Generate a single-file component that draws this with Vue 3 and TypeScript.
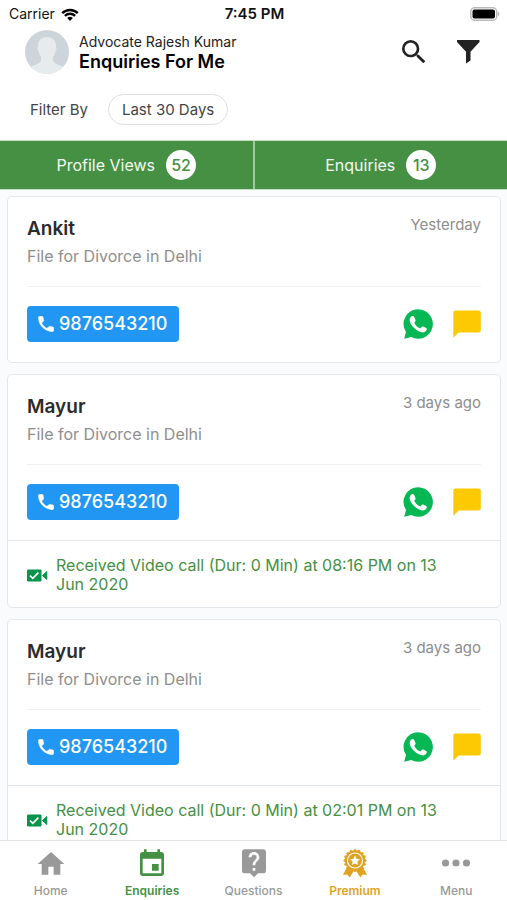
<script setup lang="ts">
interface Enquiry {
  id: number
  name: string
  when: string
  subject: string
  phone: string
  call?: string
}

interface NavItem {
  key: 'home' | 'enquiries' | 'questions' | 'premium' | 'menu'
  label: string
}

const tabs = [
  { label: 'Profile Views', count: 52 },
  { label: 'Enquiries', count: 13 },
]

const enquiries: Enquiry[] = [
  { id: 1, name: 'Ankit', when: 'Yesterday', subject: 'File for Divorce in Delhi', phone: '9876543210' },
  {
    id: 2,
    name: 'Mayur',
    when: '3 days ago',
    subject: 'File for Divorce in Delhi',
    phone: '9876543210',
    call: 'Received Video call (Dur: 0 Min) at 08:16 PM on 13 Jun 2020',
  },
  {
    id: 3,
    name: 'Mayur',
    when: '3 days ago',
    subject: 'File for Divorce in Delhi',
    phone: '9876543210',
    call: 'Received Video call (Dur: 0 Min) at 02:01 PM on 13 Jun 2020',
  },
]

const navItems: NavItem[] = [
  { key: 'home', label: 'Home' },
  { key: 'enquiries', label: 'Enquiries' },
  { key: 'questions', label: 'Questions' },
  { key: 'premium', label: 'Premium' },
  { key: 'menu', label: 'Menu' },
]

// Scalloped outline of the premium rosette
const scallops = Array.from({ length: 16 }, (_, i) => {
  const a = (i * Math.PI) / 8
  return { x: 16 + 10 * Math.cos(a), y: 12.5 + 10 * Math.sin(a) }
})
</script>

<template>
  <div class="screen">
    <div class="status">
      <div class="carrier">
        <span>Carrier</span>
        <svg class="wifi" viewBox="0 0 18 13" aria-hidden="true">
          <path d="M1.2 5.1a11.2 11.2 0 0 1 15.6 0" />
          <path d="M3.9 7.9a7.3 7.3 0 0 1 10.2 0" />
          <path class="dot" d="M9 13 6.2 10.1a4 4 0 0 1 5.6 0z" />
        </svg>
      </div>
      <div class="clock">7:45 PM</div>
      <div class="power">
        <svg class="battery" viewBox="0 0 30 14" aria-hidden="true">
          <rect x="0.75" y="0.75" width="26" height="12.5" rx="4" fill="#fff" stroke="#b9b9b9" stroke-width="1.5" />
          <rect x="2.5" y="2.5" width="22.5" height="9" rx="2" fill="#000" />
          <path d="M28 4.5a3 3 0 0 1 0 5z" fill="#b9b9b9" />
        </svg>
      </div>
    </div>

    <header class="header">
      <svg class="avatar" viewBox="0 0 44 44" aria-hidden="true">
        <defs>
          <clipPath id="avatar-clip"><circle cx="22" cy="22" r="22" /></clipPath>
        </defs>
        <g clip-path="url(#avatar-clip)">
          <rect width="44" height="44" fill="#cdd5db" />
          <path
            fill="#e6ecee"
            d="M22 7c5.5 0 9 3.500 9 9 0 1 .6 1.500.5 3-.2 1.500-1 2-1.300 3-.5 2-1.200 3.500-2.200 4.500v4c1 3 5 4 8.500 5.500 3 1.300 5 3.500 5.500 8H2c.5-4.500 2.500-6.700 5.500-8C11 34.500 15 33.500 16 30.500v-4c-1-1-1.700-2.500-2.200-4.500-.3-1-1.100-1.500-1.300-3-.1-1.500.5-2 .5-3 0-5.500 3.500-9 9-9z"
          />
        </g>
      </svg>
      <div class="titles">
        <div class="person">Advocate Rajesh Kumar</div>
        <h1>Enquiries For Me</h1>
      </div>
      <div class="tools">
        <button type="button" aria-label="Search">
          <svg viewBox="0 0 24 24" aria-hidden="true">
            <path
              d="M15.500 14h-.79l-.28-.27A6.470 6.470 0 0 0 16 9.500 6.500 6.500 0 1 0 9.500 16c1.610 0 3.090-.59 4.230-1.570l.27.28v.79l5 4.990L20.490 19l-4.990-5zm-6 0C7.010 14 5 11.990 5 9.500S7.010 5 9.500 5 14 7.010 14 9.500 11.990 14 9.500 14z"
            />
          </svg>
        </button>
        <button type="button" aria-label="Filter">
          <svg viewBox="0 0 32 32" aria-hidden="true">
            <path d="M5 4h22.500v2L18.500 15.800v8.700l-4.500 3V15.800L5 6z" />
          </svg>
        </button>
      </div>
    </header>

    <div class="filters">
      <span>Filter By</span>
      <button type="button" class="chip">Last 30 Days</button>
    </div>

    <div class="tabs">
      <button v-for="tab in tabs" :key="tab.label" type="button" class="tab">
        <span>{{ tab.label }}</span>
        <span class="count">{{ tab.count }}</span>
      </button>
    </div>

    <main class="list">
      <article v-for="item in enquiries" :key="item.id" class="card">
        <div class="body">
          <div class="top">
            <h2>{{ item.name }}</h2>
            <span class="when">{{ item.when }}</span>
          </div>
          <p class="subject">{{ item.subject }}</p>
          <div class="actions">
            <a class="phone" :href="'tel:' + item.phone">
              <svg viewBox="0 0 24 24" aria-hidden="true">
                <path
                  d="M6.620 10.790c1.440 2.830 3.760 5.140 6.590 6.590l2.200-2.200c.27-.27.67-.36 1.020-.24 1.120.37 2.330.57 3.570.57.550 0 1 .450 1 1V20c0 .550-.450 1-1 1C10.610 21 3 13.390 3 4c0-.550.450-1 1-1h3.500c.550 0 1 .450 1 1 0 1.250.2 2.450.57 3.570.11.350.03.740-.250 1.020l-2.200 2.200z"
                />
              </svg>
              <span>{{ item.phone }}</span>
            </a>
            <button type="button" class="icon" aria-label="WhatsApp">
              <svg class="whatsapp" viewBox="0 0 30 30" aria-hidden="true">
                <path fill="#06b853" d="M15.200.3a14.700 14.700 0 1 1-6.900 27.700L1.200 29.700 3 23A14.700 14.700 0 0 1 15.200.3z" />
                <path
                  fill="#fff"
                  d="M7.200 8.900c.8-1.500 2.100-2 3.100-1.700.5.1.8.5 1 1l1.200 2.900c.2.5.1.9-.2 1.300l-1.100 1.400c1.300 2.600 3.200 4.500 6.100 5.700l1.500-1.700c.4-.4.8-.5 1.300-.3l3 1.400c.6.3.9.6.8 1.200-.2 2-2.200 3.300-4 3.300-2.900 0-6.200-1.800-8.800-4.300-2.700-2.600-4.500-5.700-4.500-8 0-.8.2-1.600.6-2.200z"
                />
              </svg>
            </button>
            <button type="button" class="icon" aria-label="Message">
              <svg class="chat" viewBox="0 0 28 28" aria-hidden="true">
                <path fill="#fdc903" d="M2.500.5h23A2.300 2.300 0 0 1 27.800 2.800v17.400a2.300 2.300 0 0 1-2.300 2.300H5.700L.3 27.800v-25A2.300 2.300 0 0 1 2.500.5z" />
              </svg>
            </button>
          </div>
        </div>
        <div v-if="item.call" class="call">
          <svg viewBox="0 0 21 13" aria-hidden="true">
            <rect y="0.500" width="14.500" height="12" rx="1.200" fill="#07944a" />
            <path d="M15.500 6.500 19.800 2.500v8z" fill="#07944a" stroke="#07944a" stroke-width="1" stroke-linejoin="round" />
            <path d="m3 6.600 2.800 2.700 5.600-5.600" fill="none" stroke="#fff" stroke-width="1.700" />
          </svg>
          <span>{{ item.call }}</span>
        </div>
      </article>
    </main>

    <nav class="nav">
      <a v-for="item in navItems" :key="item.key" href="#" :class="['nav-item', item.key]">
        <svg v-if="item.key === 'home'" viewBox="0 0 24 24" aria-hidden="true">
          <path d="M10 20v-6h4v6h5v-8h3L12 3 2 12h3v8z" />
        </svg>
        <svg v-else-if="item.key === 'enquiries'" viewBox="0 0 24 24" aria-hidden="true">
          <path
            d="M17 12h-5v5h5v-5zM16 1v2H8V1H6v2H5c-1.110 0-1.990.9-1.990 2L3 19c0 1.100.89 2 2 2h14c1.100 0 2-.9 2-2V5c0-1.100-.9-2-2-2h-1V1h-2zm3 18H5V8h14v11z"
          />
        </svg>
        <svg v-else-if="item.key === 'questions'" viewBox="0 0 24 24" aria-hidden="true">
          <path
            d="M19 1H5c-1.110 0-2 .9-2 2v14c0 1.100.89 2 2 2h4l3 3 3-3h4c1.100 0 2-.9 2-2V3c0-1.100-.9-2-2-2zm-6 16h-2v-2h2v2zm2.070-7.750l-.9.920C13.450 10.900 13 11.500 13 13h-2v-.5c0-1.100.450-2.100 1.170-2.830l1.240-1.260c.37-.36.590-.86.590-1.410 0-1.100-.9-2-2-2s-2 .9-2 2H8c0-2.210 1.790-4 4-4s4 1.790 4 4c0 .880-.36 1.680-.93 2.250z"
          />
        </svg>
        <svg v-else-if="item.key === 'premium'" viewBox="0 0 32 32" aria-hidden="true">
          <path d="M8 19 4 27l4.400-.4 2.300 3L15 22.500h2l4.300 7.100 2.300-3 4.400.4L24 19z" />
          <circle v-for="(s, i) in scallops" :key="i" :cx="s.x" :cy="s.y" r="1.500" />
          <circle cx="16" cy="12.500" r="10.200" />
          <circle cx="16" cy="12.500" r="7.500" fill="none" stroke="#fff" stroke-width="1.100" />
          <path
            fill="#fff"
            d="m16 7.600 1.500 3.100 3.400.5-2.500 2.400.6 3.400-3-1.600-3 1.600.6-3.400-2.500-2.400 3.400-.5z"
          />
        </svg>
        <svg v-else viewBox="0 0 32 32" aria-hidden="true">
          <circle cx="5.500" cy="15" r="3.600" />
          <circle cx="16" cy="15" r="3.600" />
          <circle cx="26.500" cy="15" r="3.600" />
        </svg>
        <span>{{ item.label }}</span>
      </a>
    </nav>
  </div>
</template>

<style>
body {
  margin: 0;
}
</style>

<style scoped>
.screen {
  height: 100vh;
  display: flex;
  flex-direction: column;
  background: #fff;
  color: #111;
  font-family: Inter, "Liberation Sans", sans-serif;
}

.screen * {
  box-sizing: border-box;
}

button {
  padding: 0;
  border: 0;
  background: none;
  color: inherit;
  font: inherit;
  cursor: pointer;
}

a {
  color: inherit;
  text-decoration: none;
}

svg {
  display: block;
  flex: none;
}

h1,
h2,
p {
  margin: 0;
}

.status {
  display: grid;
  grid-template-columns: 1fr auto 1fr;
  align-items: center;
  height: 28px;
  flex: none;
  padding: 0 7px 0 9px;
  font-size: 14px;
  line-height: 20px;
}

.carrier {
  display: flex;
  align-items: center;
  gap: 6px;
}

.wifi {
  width: 18px;
  height: 13px;
  fill: none;
  stroke: #000;
  stroke-width: 2.4;
}

.wifi .dot {
  fill: #000;
  stroke: none;
}

.clock {
  font-size: 15px;
  font-weight: 600;
}

.battery {
  width: 30px;
  height: 14px;
  margin-left: auto;
}

.header {
  display: flex;
  align-items: center;
  flex: none;
  padding: 2px 23px 0 25px;
  gap: 10px;
}

.avatar {
  width: 44px;
  height: 44px;
}

.titles {
  flex: 1;
}

.person {
  font-size: 14px;
  line-height: 20px;
  color: #222;
}

h1 {
  font-size: 18px;
  line-height: 20px;
  font-weight: 600;
  color: #000;
}

.tools {
  display: flex;
  gap: 22px;
}

.tools svg {
  width: 32px;
  height: 32px;
  fill: #222;
}

.filters {
  display: flex;
  align-items: center;
  flex: none;
  gap: 20px;
  padding: 20px 30px 15px;
  font-size: 15px;
  line-height: 20px;
  color: #444;
}

.chip {
  height: 31px;
  padding: 0 13px;
  border: 1px solid #dcdfe2;
  border-radius: 16px;
}

.tabs {
  display: flex;
  flex: none;
  height: 50px;
  border-top: 1px solid #c5e1c5;
  border-bottom: 1px solid #c5e1c5;
  background: #459043;
}

.tab {
  display: flex;
  flex: 1;
  align-items: center;
  justify-content: center;
  gap: 11px;
  color: #f3faf2;
  font-size: 16px;
  line-height: 20px;
}

.tab + .tab {
  border-left: 2px solid #a2c8a1;
}

.count {
  display: grid;
  place-items: center;
  width: 30px;
  height: 30px;
  border-radius: 50%;
  background: #fff;
  color: #459043;
  font-size: 16px;
  font-weight: 500;
}

.list {
  display: flex;
  flex: 1;
  flex-direction: column;
  gap: 11px;
  min-height: 0;
  overflow: hidden;
  padding: 6px 6px 0 7px;
  background: #fafbfd;
}

.card {
  flex: none;
  border: 1px solid #e3e8ec;
  border-radius: 5px;
  background: #fff;
}

.body {
  padding: 19px 19px 20px;
}

.top {
  display: flex;
  justify-content: space-between;
}

h2 {
  font-size: 19px;
  line-height: 26px;
  font-weight: 600;
  color: #2b2b2b;
}

.when {
  font-size: 15px;
  line-height: 18px;
  color: #8e8e8e;
}

.subject {
  padding: 4px 0 20px;
  border-bottom: 1px solid #eef0f2;
  font-size: 16px;
  line-height: 20px;
  color: #8e8e8e;
}

.actions {
  display: flex;
  align-items: center;
  gap: 20px;
  padding-top: 19px;
}

.phone {
  display: flex;
  align-items: center;
  gap: 3px;
  height: 36px;
  margin-right: auto;
  padding: 0 12px 0 9px;
  border-radius: 4px;
  background: #2196f3;
  color: #fff;
  font-size: 18px;
  line-height: 24px;
  font-weight: 500;
}

.phone svg {
  width: 20px;
  height: 20px;
  fill: #fff;
  stroke: #fff;
  stroke-width: 0.8;
}

.whatsapp {
  width: 30px;
  height: 30px;
}

.chat {
  width: 28px;
  height: 28px;
}

.call {
  display: flex;
  align-items: center;
  gap: 8px;
  padding: 15px 48px 13px 19px;
  border-top: 1px solid #e3e8ec;
  color: #459043;
  font-size: 16px;
  line-height: 19px;
}

.call svg {
  width: 21px;
  height: 13px;
}

.nav {
  display: flex;
  flex: none;
  height: 60px;
  border-top: 1px solid #e0e2e4;
  background: #fff;
}

.nav-item {
  display: flex;
  flex: 1;
  flex-direction: column;
  align-items: center;
  gap: 3px;
  padding-top: 7px;
  color: #999;
  font-size: 12px;
  line-height: 16px;
  font-weight: 500;
}

.nav-item svg {
  width: 32px;
  height: 32px;
  fill: currentColor;
}

.nav-item.enquiries {
  color: #459043;
  font-weight: 600;
}

.nav-item.premium {
  color: #dfa321;
  font-weight: 600;
}
</style>
